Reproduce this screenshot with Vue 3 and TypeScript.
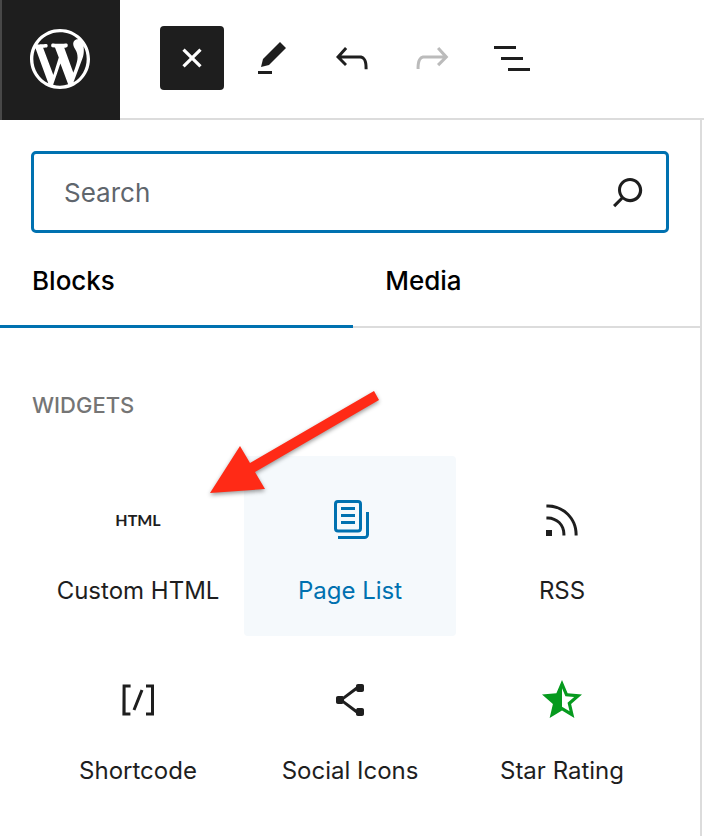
<script setup lang="ts">
import { ref } from 'vue'

interface Tool {
  label: string
  path: string
  kind?: 'close' | 'disabled'
}

interface Block {
  name: string
  path?: string
  glyph?: string
  tone?: 'green'
}

const tools: Tool[] = [
  { label: 'Toggle block inserter', kind: 'close', path: 'M18 11.2h-5.2V6h-1.6v5.2H6v1.6h5.2V18h1.6v-5.2H18z' },
  { label: 'Tools', path: 'm19 7-3-3-8.5 8.5-1 4 4-1L19 7Zm-7 11.5H5V20h7v-1.5Z' },
  { label: 'Undo', path: 'M18.3 11.7c-.6-.6-1.4-.9-2.3-.9H6.7l2.9-3.3-1.1-1-4.5 5L8.5 16l1-1-2.7-2.7H16c.5 0 .9.2 1.3.5 1 1 1 3.4 1 4.5v.3h1.5v-.2c0-1.5 0-4.3-1.5-5.7z' },
  { label: 'Redo', kind: 'disabled', path: 'M15.6 6.5l-1.1 1 2.9 3.3H8c-.9 0-1.7.3-2.3.9-1.4 1.5-1.4 4.2-1.4 5.6v.2h1.5v-.3c0-1.1 0-3.5 1-4.5.3-.3.7-.5 1.3-.5h9.2L14.5 15l1.1 1.1 4.6-4.6-4.6-5z' },
  { label: 'List view', path: 'M3 6h11v1.5H3V6Zm3.5 5.5h11V13h-11v-1.5ZM21 17H10v1.5h11V17Z' },
]

const blocks: Block[] = [
  { name: 'Custom HTML', glyph: 'HTML' },
  { name: 'Page List', path: 'M14.5 5.5h-7V7h7V5.5ZM7.5 9h7v1.5h-7V9Zm7 3.5h-7V14h7v-1.5ZM16 2H6a2 2 0 0 0-2 2v12.2a2 2 0 0 0 2 2h10a2 2 0 0 0 2-2V4a2 2 0 0 0-2-2ZM6 3.5h10a.5.5 0 0 1 .5.5v12.2a.5.5 0 0 1-.5.5H6a.5.5 0 0 1-.5-.5V4a.5.5 0 0 1 .5-.5ZM20 8v11.2c0 .5-.3.8-.8.8H6v1.5h13.2a2.3 2.3 0 0 0 2.3-2.3V8H20Z' },
  { name: 'RSS', path: 'M5 10.2h-.8v1.5H5c1.9 0 3.8.8 5.1 2.1 1.4 1.4 2.1 3.2 2.1 5.1v.8h1.5V19c0-2.3-.9-4.5-2.6-6.2-1.6-1.6-3.8-2.6-6.1-2.6zm10.4-1.6C12.6 5.8 8.9 4.2 5 4.2h-.8v1.5H5c3.5 0 6.9 1.4 9.4 3.9s3.9 5.8 3.9 9.4v.8h1.5V19c0-3.9-1.6-7.6-4.4-10.4zM4 20h3v-3H4v3z' },
  { name: 'Shortcode', path: 'M16 4.2v1.5h2.5v12.5H16v1.5h4V4.2h-4zM4.2 19.8h4v-1.5H5.8V5.8h2.5V4.2h-4l-.1 15.6zm5.1-3.1l1.4.6 4-10-1.4-.6-4 10z' },
  { name: 'Social Icons', path: 'M9 11.8l6.1-4.5c.1.4.4.7.9.7h2c.6 0 1-.4 1-1V5c0-.6-.4-1-1-1h-2c-.6 0-1 .4-1 1v.4l-6.4 4.8c-.2-.1-.4-.2-.6-.2H6c-.6 0-1 .4-1 1v2c0 .6.4 1 1 1h2c.2 0 .4-.1.6-.2l6.4 4.8v.4c0 .6.4 1 1 1h2c.6 0 1-.4 1-1v-2c0-.6-.4-1-1-1h-2c-.5 0-.8.3-.9.7L9 12.2v-.4z' },
  { name: 'Star Rating', tone: 'green', path: 'M22 9.24l-7.19-.62L12 2 9.19 8.63 2 9.24l5.46 4.73L5.82 21 12 17.27 18.18 21l-1.63-7.03L22 9.24zM12 15.4V6.1l1.71 4.04 4.38.38-3.32 2.88 1 4.28L12 15.4z' },
]

const tabs = ['Blocks', 'Media']
const activeTab = ref('Blocks')
const activeBlock = ref('Page List')
const query = ref('')
</script>

<template>
  <div class="editor">
    <header class="header">
      <a class="home" href="#" aria-label="WordPress dashboard">
        <svg class="logo" viewBox="-2 -2 24 24" aria-hidden="true">
          <path d="M20 10c0-5.51-4.49-10-10-10C4.48 0 0 4.49 0 10c0 5.52 4.48 10 10 10 5.51 0 10-4.48 10-10zM7.78 15.37L4.37 6.22c.55-.02 1.17-.08 1.17-.08.5-.06.44-1.13-.06-1.11 0 0-1.45.11-2.37.11-.18 0-.37 0-.58-.01C4.12 2.69 6.87 1.11 10 1.11c2.33 0 4.45.87 6.05 2.34-.68-.11-1.65.39-1.65 1.58 0 .74.45 1.36.9 2.1.35.61.55 1.36.55 2.46 0 1.49-1.4 5-1.4 5l-3.03-8.37c.54-.02.82-.17.82-.17.5-.05.44-1.25-.06-1.22 0 0-1.44.12-2.38.12-.87 0-2.33-.12-2.33-.12-.5-.03-.56 1.2-.06 1.22l.92.08 1.26 3.41zM17.41 10c.24-.64.74-1.87.43-4.25.7 1.29 1.05 2.71 1.05 4.25 0 3.29-1.73 6.24-4.4 7.78.97-2.59 1.94-5.2 2.92-7.78zM6.1 18.09C3.12 16.65 1.11 13.53 1.11 10c0-1.3.23-2.48.72-3.59C3.25 10.3 4.67 14.2 6.1 18.09zm4.03-6.63l2.58 6.98c-.86.29-1.76.45-2.71.45-.79 0-1.57-.11-2.29-.33.81-2.38 1.62-4.74 2.42-7.1z" />
        </svg>
      </a>
      <div class="toolbar">
        <button
          v-for="tool in tools"
          :key="tool.label"
          type="button"
          class="tool"
          :class="tool.kind"
          :aria-label="tool.label"
          :disabled="tool.kind === 'disabled'"
        >
          <svg class="icon" viewBox="0 0 24 24" aria-hidden="true"><path :d="tool.path" /></svg>
        </button>
      </div>
    </header>

    <main class="inserter">
      <div class="search">
        <input v-model="query" class="search-input" type="text" placeholder="Search" aria-label="Search" />
        <svg class="icon" viewBox="0 0 24 24" aria-hidden="true">
          <path d="M13 5c-3.3 0-6 2.7-6 6 0 1.4.5 2.7 1.3 3.7l-3.8 3.8 1.1 1.1 3.8-3.8c1 .8 2.3 1.3 3.7 1.3 3.3 0 6-2.7 6-6S16.3 5 13 5zm0 10.5c-2.5 0-4.5-2-4.5-4.5s2-4.5 4.5-4.5 4.5 2 4.5 4.5-2 4.5-4.5 4.5z" />
        </svg>
      </div>

      <div class="tabs" role="tablist">
        <button
          v-for="tab in tabs"
          :key="tab"
          type="button"
          role="tab"
          class="tab"
          :class="{ active: tab === activeTab }"
          :aria-selected="tab === activeTab"
          @click="activeTab = tab"
        >{{ tab }}</button>
      </div>

      <section class="category">
        <h2 class="category-title">Widgets</h2>
        <div class="grid">
          <button
            v-for="block in blocks"
            :key="block.name"
            type="button"
            class="block"
            :class="{ highlighted: block.name === activeBlock }"
            @mouseenter="activeBlock = block.name"
          >
            <svg class="icon" :class="block.tone" viewBox="0 0 24 24" aria-hidden="true">
              <text v-if="block.glyph" class="glyph" x="12" y="15" text-anchor="middle">{{ block.glyph }}</text>
              <path v-else fill-rule="evenodd" :d="block.path" />
            </svg>
            <span class="block-name">{{ block.name }}</span>
          </button>
        </div>
        <svg class="pointer" viewBox="0 0 180 116" aria-hidden="true">
          <path d="M4 107 34 60 44 77 168 5 173 14 49 86 59 103Z" />
        </svg>
      </section>
    </main>
  </div>
</template>

<style>
body {
  margin: 0;
  background: #fff;
}
</style>

<style scoped>
.editor {
  display: flex;
  flex-direction: column;
  min-height: 100vh;
  font-family: Inter, "Liberation Sans", sans-serif;
  color: #1e1e1e;
}

button {
  margin: 0;
  padding: 0;
  border: 0;
  background: none;
  color: inherit;
  font: inherit;
  cursor: pointer;
}

.icon {
  display: block;
  flex: none;
  width: 48px;
  height: 48px;
  fill: currentColor;
  overflow: visible;
}

.header {
  display: flex;
  gap: 40px;
  box-shadow: inset 0 -2px #dcdcdc;
}

.home {
  box-sizing: border-box;
  display: flex;
  justify-content: center;
  width: 120px;
  height: 120px;
  padding: 23px 2px 0 0;
  border-left: 2px solid #484848;
  background: #1e1e1e;
}

.logo {
  width: 72px;
  height: 72px;
  fill: #fff;
}

.toolbar {
  display: flex;
  gap: 16px;
  padding-top: 26px;
}

.tool {
  display: flex;
  align-items: center;
  justify-content: center;
  width: 64px;
  height: 64px;
  border-radius: 4px;
}

.tool.close {
  background: #1e1e1e;
  color: #fff;
}

.tool.close .icon {
  transform: rotate(45deg);
}

.tool.disabled {
  color: #bbb;
  cursor: default;
}

.inserter {
  flex: 1;
  margin-right: 2px;
  border-right: 2px solid #dcdcdc;
}

.search {
  display: flex;
  align-items: center;
  height: 76px;
  margin: 31px 31px 0;
  padding: 0 14px 0 30px;
  border: 3px solid #0071b0;
  border-radius: 5px;
}

.search-input {
  flex: 1;
  min-width: 0;
  padding: 0;
  border: 0;
  outline: 0;
  background: none;
  color: #1e1e1e;
  font: inherit;
  font-size: 26px;
}

.search-input::placeholder {
  color: #5f666d;
  opacity: 1;
}

.tabs {
  display: flex;
  box-shadow: inset 0 -2px #dcdcdc;
}

.tab {
  flex: 1 1 auto;
  height: 95px;
  padding: 0 32px;
  color: #000;
  font-size: 26px;
  font-weight: 500;
  text-align: left;
}

.tab.active {
  box-shadow: inset 0 -3px #0071b0;
}

.category {
  position: relative;
  padding: 64px 32px 20px;
}

.category-title {
  margin: 0 0 38px;
  color: #757575;
  font-size: 22px;
  font-weight: 500;
  line-height: 26px;
  text-transform: uppercase;
}

.grid {
  display: grid;
  grid-template-columns: repeat(3, 1fr);
}

.block {
  display: flex;
  flex-direction: column;
  align-items: center;
  gap: 32px;
  height: 180px;
  padding-top: 40px;
  border-radius: 4px;
}

.block.highlighted {
  background: #f5f9fc;
  color: #0071b0;
}

.block-name {
  font-size: 24px;
  line-height: 30px;
}

.green {
  color: #069a1e;
}

.glyph {
  font-family: Lato, Inter, sans-serif;
  font-size: 8px;
  font-weight: 700;
}

/* Callout arrow drawn over the block grid */
.pointer {
  position: absolute;
  top: 58px;
  left: 206px;
  width: 180px;
  height: 116px;
  fill: #ff2a16;
  filter: drop-shadow(0 2px 2px rgba(0, 0, 0, 0.4));
  pointer-events: none;
}
</style>
